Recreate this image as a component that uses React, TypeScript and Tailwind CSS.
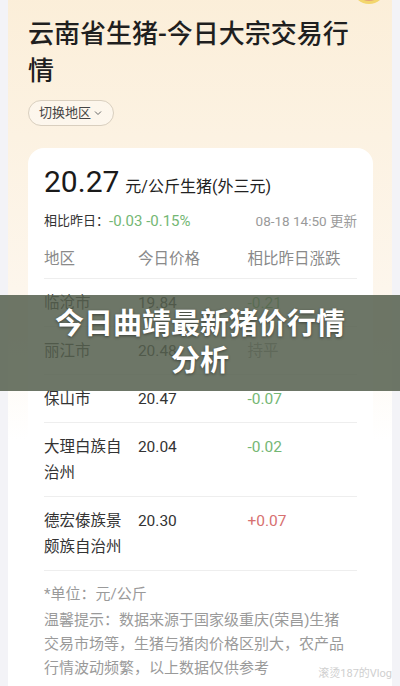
import React from "react";

const rows: { name: string; price: string; change: string; tone: "down" | "up" | "flat" }[] = [
  { name: "临沧市", price: "19.84", change: "-0.21", tone: "down" },
  { name: "丽江市", price: "20.48", change: "持平", tone: "flat" },
  { name: "保山市", price: "20.47", change: "-0.07", tone: "down" },
  { name: "大理白族自治州", price: "20.04", change: "-0.02", tone: "down" },
  { name: "德宏傣族景颇族自治州", price: "20.30", change: "+0.07", tone: "up" },
];

export default function App() {
  return (
    <div
      className="relative w-[400px] h-[686px] overflow-hidden bg-[#f3f3f7]"
      style={{ fontFamily: 'Roboto, "Noto Sans CJK SC", sans-serif' }}
    >
      <div className="relative mx-2 mt-[-16px] rounded-[18px] bg-gradient-to-b from-[#fbeed8] via-[#fdf6ec] via-40% to-white to-60% pl-5 pr-[19px] pt-8 h-[760px]">
        <div className="absolute left-[344px] top-[-14px] w-[34px] h-[34px] rounded-full border-[3px] border-[#f3d66c] bg-[#e3a275]" />
        <h1 className="text-[26px] leading-[37px] font-medium text-[#1f1f1f]">
          云南省生猪-今日大宗交易行情
        </h1>
        <div className="mt-[10px] inline-flex items-center h-[26px] px-[10px] rounded-full border border-[#d9cfbf] bg-white/40 text-[13px] text-[#444]">
          <span>切换地区</span>
          <svg width="10" height="10" viewBox="0 0 10 10" className="ml-[2px]">
            <path d="M2 3.5 L5 6.5 L8 3.5" fill="none" stroke="#666" strokeWidth="1" />
          </svg>
        </div>

        <div className="mt-[22px] rounded-[16px] bg-white px-4 pt-[14px]">
          <div className="flex items-baseline">
            <span className="text-[30px] leading-[40px] text-[#1a1a1a]">20.27</span>
            <span className="ml-[6px] text-[16px] text-[#222]">元/公斤生猪(外三元)</span>
          </div>
          <div className="mt-[9px] flex items-center h-[20px]">
            <span className="text-[13px] text-[#333]">相比昨日：</span>
            <span className="text-[15px] text-[#74b774]">-0.03 -0.15%</span>
            <span className="ml-auto text-[13.5px] text-[#9a9a9a]">08-18 14:50 更新</span>
          </div>
          <div className="mt-[15px] grid grid-cols-[30%_35%_35%] text-[15.5px] leading-[26px] text-[#8a8a8a] pb-[6px] border-b border-[#eeeeee]">
            <div>地区</div>
            <div>今日价格</div>
            <div>相比昨日涨跌</div>
          </div>
          {rows.map((r) => (
            <div
              key={r.name}
              className="grid grid-cols-[30%_35%_35%] text-[15.5px] leading-[26px] py-[10.5px] border-b border-[#eeeeee]"
            >
              <div className="pr-3 text-[#333]">{r.name}</div>
              <div className="text-[#333]">{r.price}</div>
              <div
                className={
                  r.tone === "down"
                    ? "text-[#74b774]"
                    : r.tone === "up"
                    ? "text-[#d77070]"
                    : "text-[#999]"
                }
              >
                {r.change}
              </div>
            </div>
          ))}
          <div className="pt-[10px] text-[15px] text-[#9a9a9a]">
            <div className="leading-[26px]">*单位：元/公斤</div>
            <div className="leading-[24px] mt-[1px]">
              <div>温馨提示：数据来源于国家级重庆(荣昌)生猪</div>
              <div>交易市场等，生猪与猪肉价格区别大，农产品</div>
              <div>行情波动频繁，以上数据仅供参考</div>
            </div>
          </div>
        </div>
      </div>

      <div className="absolute left-0 top-[295px] w-[400px] h-[96px] bg-[rgba(85,96,78,0.86)] flex items-center justify-center">
        <div className="max-w-[300px] text-center text-white font-bold text-[29px] leading-[37px] [text-shadow:0_1px_3px_rgba(0,0,0,0.45)]">
          今日曲靖最新猪价行情分析
        </div>
      </div>

      <div className="absolute right-[8px] top-[666px] text-[11px] text-[#cfcfcf] [text-shadow:0_0_2px_rgba(255,255,255,1)]">
        滚烫187的Vlog
      </div>
    </div>
  );
}
